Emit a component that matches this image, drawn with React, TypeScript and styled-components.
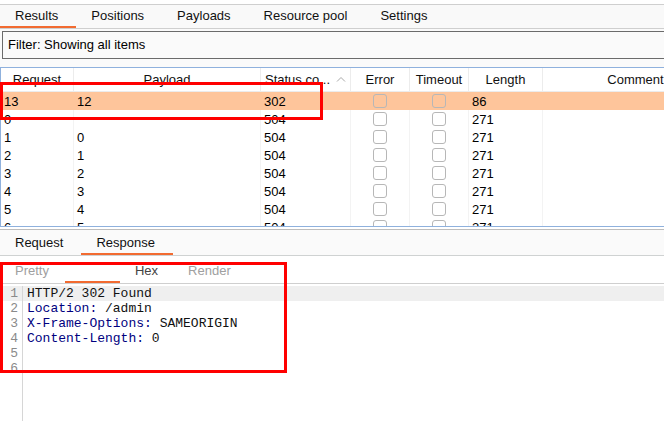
import React from 'react'
import styled, { createGlobalStyle } from 'styled-components'

const GlobalStyle = createGlobalStyle`
  html, body {
    margin: 0;
    padding: 0;
    background: #ffffff;
  }
  body {
    font-family: "Liberation Sans", Arial, sans-serif;
    font-size: 13px;
    color: #000;
  }
`

const topTabs = ['Results', 'Positions', 'Payloads', 'Resource pool', 'Settings']

const rows = [
  { req: '13', payload: '12', status: '302', length: '86', selected: true },
  { req: '0', payload: '', status: '504', length: '271' },
  { req: '1', payload: '0', status: '504', length: '271' },
  { req: '2', payload: '1', status: '504', length: '271' },
  { req: '3', payload: '2', status: '504', length: '271' },
  { req: '4', payload: '3', status: '504', length: '271' },
  { req: '5', payload: '4', status: '504', length: '271' },
  { req: '6', payload: '5', status: '504', length: '271' },
]

const responseLines: { name?: string; value: string }[] = [
  { value: 'HTTP/2 302 Found' },
  { name: 'Location:', value: ' /admin' },
  { name: 'X-Frame-Options:', value: ' SAMEORIGIN' },
  { name: 'Content-Length:', value: ' 0' },
  { value: '' },
  { value: '' },
]

export default function App(): JSX.Element {
  return (
    <>
      <GlobalStyle />
      <Page>
        <TabBar>
          {topTabs.map((t, i) => (
            <Tab key={t} $active={i === 0} $lift>
              {t}
            </Tab>
          ))}
        </TabBar>

        <FilterArea>
          <FilterBox>Filter: Showing all items</FilterBox>
        </FilterArea>

        <TableWrap>
          <Grid>
            <HeadCell>Request</HeadCell>
            <HeadCell>Payload</HeadCell>
            <HeadCell $left>
              <Ellipsis>Status co...</Ellipsis>
              <SortArrow viewBox="0 0 10 6">
                <path d="M1 5.5 L5 1.5 L9 5.5" fill="none" stroke="#a8a8a8" strokeWidth="1" />
              </SortArrow>
            </HeadCell>
            <HeadCell>Error</HeadCell>
            <HeadCell>Timeout</HeadCell>
            <HeadCell>Length</HeadCell>
            <HeadCell>Comment</HeadCell>

            {rows.map((r) => (
              <Row key={r.req} $selected={!!r.selected}>
                <Cell>{r.req}</Cell>
                <Cell>{r.payload}</Cell>
                <Cell>{r.status}</Cell>
                <Cell $center>
                  <Check />
                </Cell>
                <Cell $center>
                  <Check />
                </Cell>
                <Cell>{r.length}</Cell>
                <Cell />
              </Row>
            ))}
          </Grid>
        </TableWrap>

        <BottomTabs>
          <Tab>Request</Tab>
          <Tab $active>Response</Tab>
        </BottomTabs>

        <SubTabs>
          <SubTab $dim>Pretty</SubTab>
          <SubTabGap />
          <SubTab>Hex</SubTab>
          <SubTab $dim>Render</SubTab>
        </SubTabs>

        <Editor>
          {responseLines.map((l, i) => (
            <CodeLine key={i} $current={i === 0}>
              <LineNo>{i + 1}</LineNo>
              <Code>
                {l.name && <HeaderName>{l.name}</HeaderName>}
                {l.value}
              </Code>
            </CodeLine>
          ))}
          <GutterRest />
        </Editor>

        <Marker $x={0} $y={82} $w={323} $h={38} />
        <Marker $x={0} $y={262} $w={287} $h={111} />
      </Page>
    </>
  )
}

const Page = styled.div`
  position: relative;
  width: 664px;
  height: 421px;
  overflow: hidden;
  display: flex;
  flex-direction: column;
  padding-top: 4px;
  box-sizing: border-box;
`

const TabBar = styled.div`
  display: flex;
  height: 23px;
  background: #f9f9f9;
  border-top: 1px solid #cfcfcf;
  border-bottom: 1px solid #cfcfcf;
`

const Tab = styled.div<{ $active?: boolean; $lift?: boolean }>`
  padding: 0 18px ${(p) => (p.$lift ? '2px' : '0')} 15px;
  display: flex;
  align-items: center;
  color: #111;
  white-space: nowrap;
  box-shadow: ${(p) => (p.$active ? 'inset 0 -2px 0 #f26b31' : 'none')};
`

const FilterArea = styled.div`
  background: #fafafa;
  padding: 2px 0 8px 2px;
`

const FilterBox = styled.div`
  width: 700px;
  height: 28px;
  border: 1px solid #6b6b6b;
  background: #fafafa;
  display: flex;
  align-items: center;
  padding: 0 0 1px 5px;
  box-sizing: border-box;
`

const TableWrap = styled.div`
  height: 158px;
  overflow: hidden;
  border-top: 1px solid #8fb1dd;
  border-left: 1px solid #8fb1dd;
  border-bottom: 1px solid #8fb1dd;
  background: #fff;
`

const Grid = styled.div`
  display: grid;
  grid-template-columns: 73px 187px 90px 59px 59px 74px 186px;
  grid-template-rows: 24px;
  grid-auto-rows: 18px;
  width: 729px;
`

const HeadCell = styled.div<{ $left?: boolean }>`
  display: flex;
  align-items: center;
  justify-content: ${(p) => (p.$left ? 'space-between' : 'center')};
  padding: 0 ${(p) => (p.$left ? '4px' : '0')} 1px ${(p) => (p.$left ? '4px' : '0')};
  border-right: 1px solid #ececec;
  border-bottom: 1px solid #ececec;
  white-space: nowrap;
  overflow: hidden;
  color: #111;
`

const Ellipsis = styled.span`
  overflow: hidden;
`

const SortArrow = styled.svg`
  width: 10px;
  height: 6px;
  flex: none;
`

const Row = styled.div<{ $selected: boolean }>`
  display: contents;
  & > div {
    background: ${(p) => (p.$selected ? '#fec59b' : 'transparent')};
    border-right-color: ${(p) => (p.$selected ? '#fec59b' : '#f3f3f3')};
  }
`

const Cell = styled.div<{ $center?: boolean }>`
  display: flex;
  align-items: center;
  justify-content: ${(p) => (p.$center ? 'center' : 'flex-start')};
  padding-left: ${(p) => (p.$center ? '0' : '3px')};
  border-right: 1px solid #f3f3f3;
  white-space: nowrap;
  overflow: hidden;
`

const Check = styled.span`
  width: 12px;
  height: 12px;
  border: 1px solid #b7b7b7;
  border-radius: 3px;
  box-sizing: content-box;
`

const BottomTabs = styled.div`
  display: flex;
  margin-top: 2px;
  height: 25px;
  background: #fafafa;
  border-top: 1px solid #bdbdbd;
  border-bottom: 1px solid #cfd2d2;
`

const SubTabs = styled.div`
  display: flex;
  height: 27px;
  background: #fff;
  border-bottom: 1px solid #cfcfcf;
  padding-left: 15px;
`

const SubTab = styled.div<{ $dim?: boolean }>`
  display: flex;
  align-items: center;
  padding-top: 1px;
  color: ${(p) => (p.$dim ? '#a0a0a0' : '#444')};
  margin-right: 30px;
`

const SubTabGap = styled.div`
  width: 55px;
  margin: 0 15px 0 -14px;
  box-shadow: inset 0 -2px 0 #f26b31;
`

const Editor = styled.div`
  flex: 1;
  display: flex;
  flex-direction: column;
  margin-top: 2px;
  font-family: "Liberation Mono", "Courier New", monospace;
  font-size: 13px;
`

const CodeLine = styled.div<{ $current: boolean }>`
  display: flex;
  height: 15px;
  line-height: 15px;
  background: ${(p) => (p.$current ? '#efefef' : '#fff')};
`

const LineNo = styled.div`
  width: 18px;
  padding-right: 4px;
  text-align: right;
  color: #8a8a8a;
  border-right: 1px solid #d6d6d6;
  flex: none;
`

const Code = styled.div`
  padding-left: 4px;
  white-space: pre;
  color: #111;
`

const HeaderName = styled.span`
  color: #000080;
`

const GutterRest = styled.div`
  flex: 1;
  width: 22px;
  border-right: 1px solid #d6d6d6;
`

const Marker = styled.div<{ $x: number; $y: number; $w: number; $h: number }>`
  position: absolute;
  left: ${(p) => p.$x}px;
  top: ${(p) => p.$y}px;
  width: ${(p) => p.$w}px;
  height: ${(p) => p.$h}px;
  border: 3px solid #ff0000;
  box-sizing: border-box;
  pointer-events: none;
`
